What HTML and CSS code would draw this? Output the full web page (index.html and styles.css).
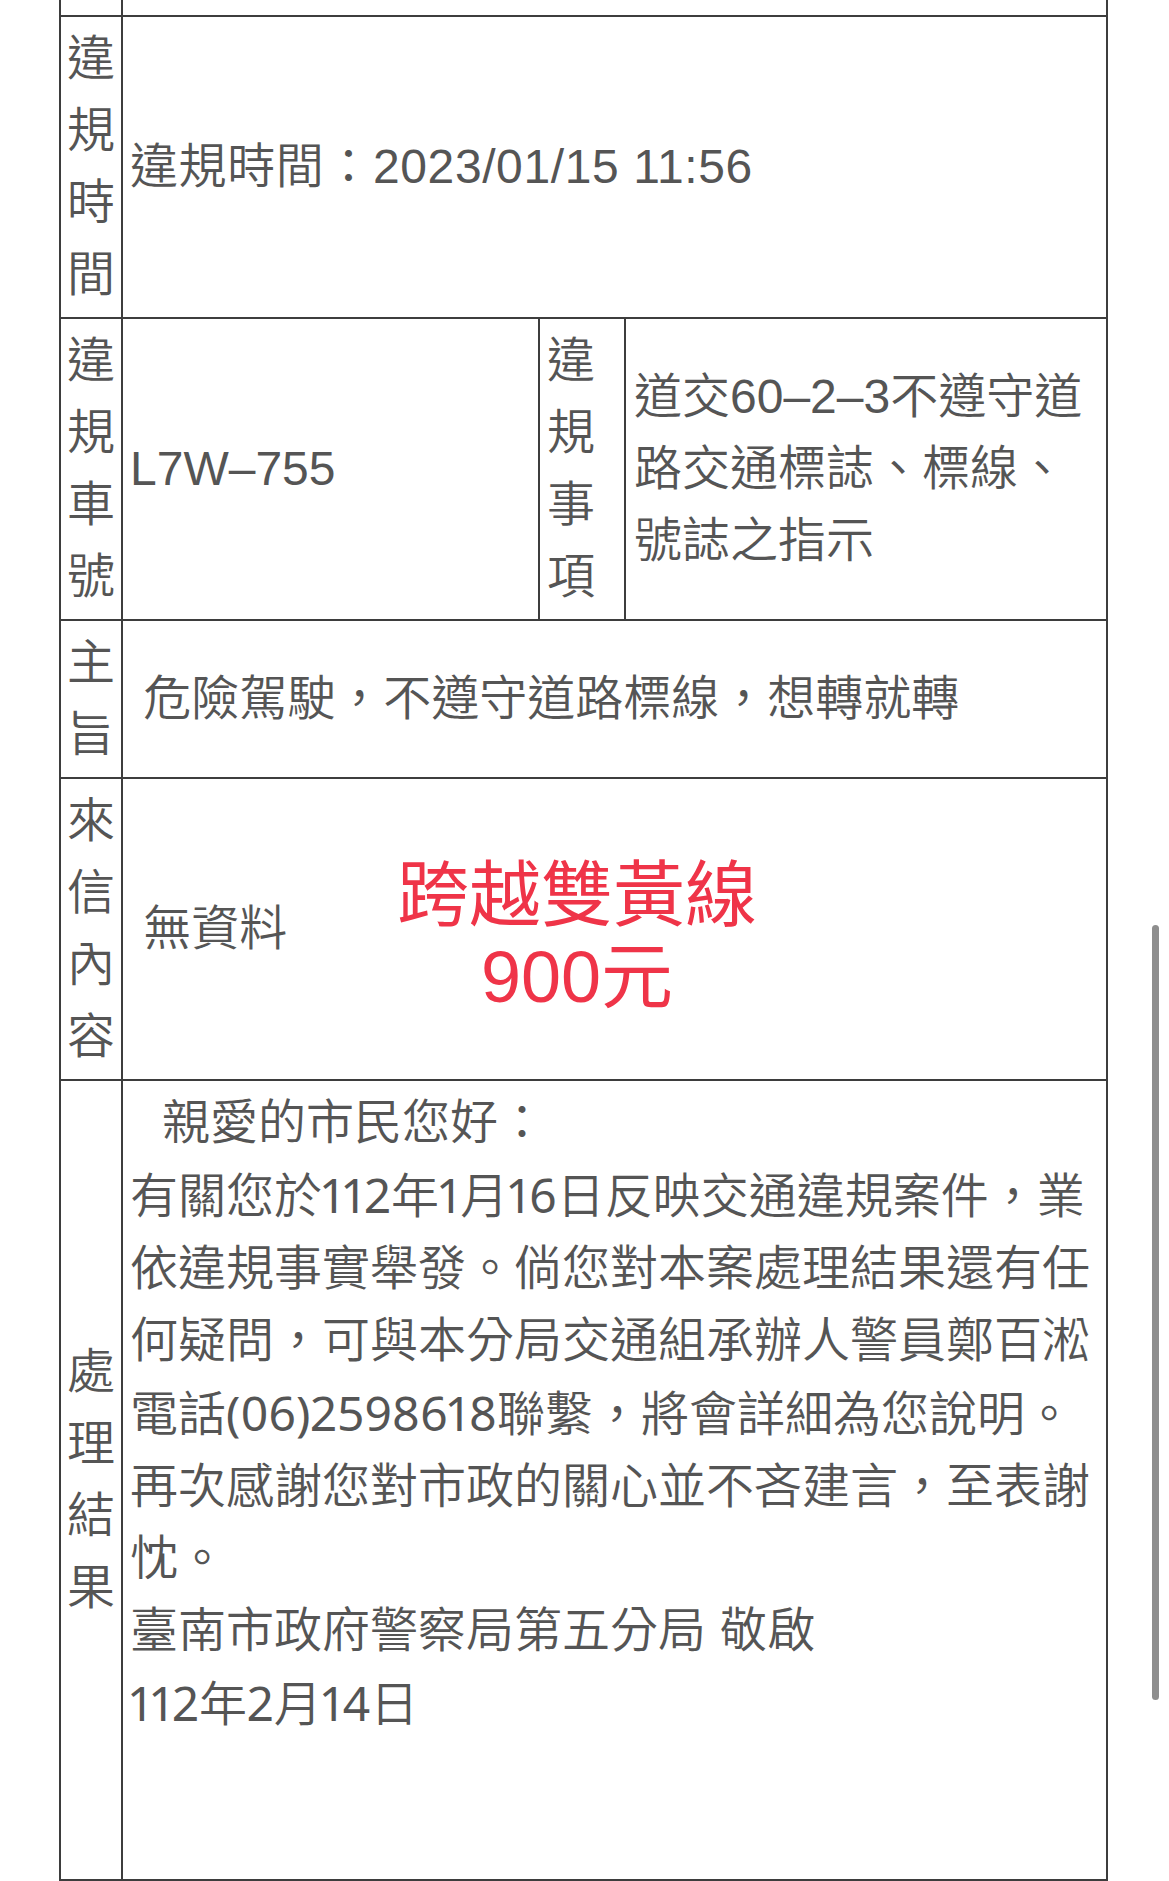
FILE: index.html
```html
<!DOCTYPE html>
<html lang="zh-Hant">
<head>
<meta charset="utf-8">
<title>交通違規檢舉處理結果</title>
<link rel="stylesheet" href="styles.css">
</head>
<body>
<div class="sheet">
  <div class="cell label top-row"></div>
  <div class="cell content span3 top-row"></div>

  <div class="cell label">違規時間</div>
  <div class="cell content span3 time">違規時間：2023/01/15 11:56</div>

  <div class="cell label">違規車號</div>
  <div class="cell content">L7W–755</div>
  <div class="cell label label-wide">違規事項</div>
  <div class="cell content item">道交60–2–3不遵守道路交通標誌、標線、號誌之指示</div>

  <div class="cell label">主旨</div>
  <div class="cell content span3">&nbsp;危險駕駛，不遵守道路標線，想轉就轉</div>

  <div class="cell label">來信內容</div>
  <div class="cell content span3 letter">&nbsp;無資料
    <div class="stamp">跨越雙黃線<br>900元</div>
  </div>

  <div class="cell label">處理結果</div>
  <div class="cell span3 result"><span class="greet">親愛的市民您好：</span><br>有關您於<span class="num">112</span>年<span class="num">1</span>月<span class="num">16</span>日反映交通違規案件，業<br>依違規事實舉發。倘您對本案處理結果還有任<br>何疑問，可與本分局交通組承辦人警員鄭百淞<br>電話<span class="num">(06)2598618</span>聯繫，將會詳細為您說明。<br>再次感謝您對市政的關心並不吝建言，至表謝<br>忱。<br>臺南市政府警察局第五分局 敬啟<br><span class="num">112</span>年<span class="num">2</span>月<span class="num">14</span>日</div>
</div>
<div class="scroll-thumb"></div>
</body>
</html>
```

FILE: styles.css
```css
* {
  box-sizing: border-box;
}

html, body {
  margin: 0;
  padding: 0;
  background: #ffffff;
}

body {
  color: #555555;
  font-family: "Liberation Sans", "Noto Sans CJK TC", sans-serif;
  font-size: 48px;
  font-weight: 350;
  line-height: 72px;
  overflow: hidden;
  height: 1881px;
}

.sheet {
  margin-left: 59px;
  width: 1049px;
  display: grid;
  grid-template-columns: 62px 417px 86px 482px;
  border-left: 2px solid #3d3d3d;
}

.cell {
  border-right: 2px solid #3d3d3d;
  border-bottom: 2px solid #3d3d3d;
  padding: 6px 0;
  display: flex;
  align-items: center;
}

.span3 {
  grid-column: 2 / span 3;
}

.top-row {
  height: 17px;
  padding: 0;
}

.label {
  padding-left: 6px;
  padding-right: 6px;
}

.label-wide {
  padding-left: 7px;
  padding-right: 7px;
}

.content {
  padding-left: 7px;
  padding-right: 4px;
}

.time {
  letter-spacing: 0.6px;
}

.item {
  padding-left: 8px;
}

.letter {
  position: relative;
}

.stamp {
  position: absolute;
  top: 75px;
  left: 154px;
  width: 600px;
  text-align: center;
  color: #ef3448;
  font-size: 72px;
  font-weight: 400;
  line-height: 82px;
}

.result {
  display: block;
  min-height: 800px;
  padding: 6px 4px 6px 7px;
  white-space: nowrap;
}

.greet {
  padding-left: 32px;
}

.num {
  font-family: "Noto Sans", "Liberation Sans", sans-serif;
  font-weight: 400;
  font-feature-settings: "pnum" 1;
}

.scroll-thumb {
  position: absolute;
  top: 925px;
  left: 1152px;
  width: 7px;
  height: 775px;
  border-radius: 4px;
  background: #8e8e8e;
}
```
